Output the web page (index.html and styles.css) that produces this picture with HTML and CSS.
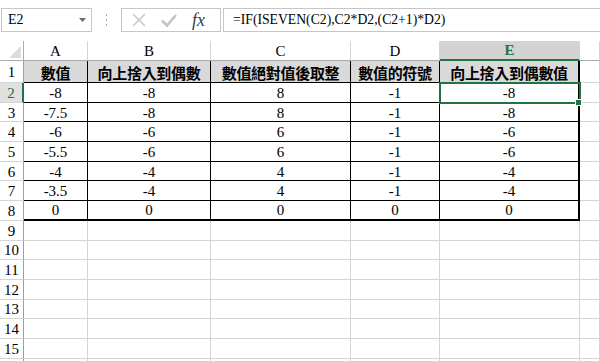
FILE: index.html
```html
<!DOCTYPE html>
<html lang="zh-Hant">
<head>
  <meta charset="UTF-8">
  <title>Sheet</title>
  <link rel="stylesheet" href="styles.css">
</head>
<body>
  <div class="formula-bar">
    <div class="name-box">
      <span>E2</span>
      <svg class="drop" width="7" height="4" viewBox="0 0 7 4"><polygon points="0,0 7,0 3.5,4" fill="#6a6a6a"/></svg>
    </div>
    <svg class="grip" width="3" height="12" viewBox="0 0 3 12">
      <rect x="1" y="0" width="1" height="2" fill="#a6a6a6"/>
      <rect x="1" y="5" width="1" height="2" fill="#a6a6a6"/>
      <rect x="1" y="10" width="1" height="2" fill="#a6a6a6"/>
    </svg>
    <div class="fx-buttons">
      <svg width="16" height="16" viewBox="0 0 16 16"><path d="M2 2 L14 14 M14 2 L2 14" stroke="#c4c4c4" stroke-width="1.4" fill="none"/></svg>
      <svg width="18" height="16" viewBox="0 0 18 16"><path d="M2 8.5 L7 13.5 L16 3" stroke="#c4c4c4" stroke-width="2.6" fill="none"/></svg>
      <span class="fx">fx</span>
    </div>
    <div class="formula-input">=IF(ISEVEN(C2),C2*D2,(C2+1)*D2)</div>
  </div>

  <div class="sheet">
    <div class="corner"><svg width="12" height="12" viewBox="0 0 12 12"><polygon points="12,0 12,12 0,12" fill="#dcdcdc"/></svg></div>
    <div class="ch">A</div><div class="ch">B</div><div class="ch">C</div><div class="ch">D</div><div class="ch sel-col">E</div><div class="ch"></div>

    <div class="rh">1</div>
    <div class="cell t h">數值</div><div class="cell t h">向上捨入到偶數</div><div class="cell t h">數值絕對值後取整</div><div class="cell t h">數值的符號</div><div class="cell t h last">向上捨入到偶數值</div><div class="cell"></div>

    <div class="rh sel-row">2</div>
    <div class="cell t">-8</div><div class="cell t">-8</div><div class="cell t">8</div><div class="cell t">-1</div><div class="cell t last active">-8</div><div class="cell"></div>

    <div class="rh">3</div>
    <div class="cell t">-7.5</div><div class="cell t">-8</div><div class="cell t">8</div><div class="cell t">-1</div><div class="cell t last">-8</div><div class="cell"></div>

    <div class="rh">4</div>
    <div class="cell t">-6</div><div class="cell t">-6</div><div class="cell t">6</div><div class="cell t">-1</div><div class="cell t last">-6</div><div class="cell"></div>

    <div class="rh">5</div>
    <div class="cell t">-5.5</div><div class="cell t">-6</div><div class="cell t">6</div><div class="cell t">-1</div><div class="cell t last">-6</div><div class="cell"></div>

    <div class="rh">6</div>
    <div class="cell t">-4</div><div class="cell t">-4</div><div class="cell t">4</div><div class="cell t">-1</div><div class="cell t last">-4</div><div class="cell"></div>

    <div class="rh">7</div>
    <div class="cell t">-3.5</div><div class="cell t">-4</div><div class="cell t">4</div><div class="cell t">-1</div><div class="cell t last">-4</div><div class="cell"></div>

    <div class="rh">8</div>
    <div class="cell t end">0</div><div class="cell t end">0</div><div class="cell t end">0</div><div class="cell t end">0</div><div class="cell t end last">0</div><div class="cell"></div>

    <div class="rh">9</div>
    <div class="cell"></div><div class="cell"></div><div class="cell"></div><div class="cell"></div><div class="cell"></div><div class="cell"></div>
    <div class="rh">10</div>
    <div class="cell"></div><div class="cell"></div><div class="cell"></div><div class="cell"></div><div class="cell"></div><div class="cell"></div>
    <div class="rh">11</div>
    <div class="cell"></div><div class="cell"></div><div class="cell"></div><div class="cell"></div><div class="cell"></div><div class="cell"></div>
    <div class="rh">12</div>
    <div class="cell"></div><div class="cell"></div><div class="cell"></div><div class="cell"></div><div class="cell"></div><div class="cell"></div>
    <div class="rh">13</div>
    <div class="cell"></div><div class="cell"></div><div class="cell"></div><div class="cell"></div><div class="cell"></div><div class="cell"></div>
    <div class="rh">14</div>
    <div class="cell"></div><div class="cell"></div><div class="cell"></div><div class="cell"></div><div class="cell"></div><div class="cell"></div>
    <div class="rh">15</div>
    <div class="cell"></div><div class="cell"></div><div class="cell"></div><div class="cell"></div><div class="cell"></div><div class="cell"></div>
    <div class="rh"></div>
    <div class="cell"></div><div class="cell"></div><div class="cell"></div><div class="cell"></div><div class="cell"></div><div class="cell"></div>
  </div>
</body>
</html>
```

FILE: styles.css
```css
body {
  margin: 0;
  padding: 0;
  width: 600px;
  height: 361px;
  overflow: hidden;
  background: #fff;
  font-family: "Liberation Serif", "Noto Sans CJK TC", serif;
  color: #000;
}

/* formula bar */
.formula-bar {
  display: flex;
  align-items: center;
  height: 24px;
  padding: 8px 0 0 1px;
}

.name-box {
  box-sizing: border-box;
  width: 91px;
  height: 24px;
  border: 1px solid #c6c6c6;
  display: flex;
  align-items: center;
  justify-content: space-between;
  padding: 0 5px 0 6px;
  font-family: "Liberation Serif", serif;
  font-size: 14px;
}

.grip {
  margin: 0 13px 0 13px;
}

.fx-buttons {
  box-sizing: border-box;
  width: 100px;
  height: 24px;
  border: 1px solid #c6c6c6;
  display: flex;
  align-items: center;
  padding: 0 0 0 9px;
  gap: 13px;
}

.fx {
  font-style: italic;
  font-size: 18px;
  color: #3c3c3c;
  margin-left: 1px;
}

.formula-input {
  box-sizing: border-box;
  flex: 1;
  height: 24px;
  margin-left: 2px;
  border: 1px solid #c6c6c6;
  border-right: none;
  padding-left: 9px;
  font-size: 13.7px;
  line-height: 22px;
}

/* sheet grid */
.sheet {
  margin-top: 9px;
  display: grid;
  grid-template-columns: 24px 64px 123px 140px 89px 140px 1fr;
  grid-template-rows: 20px 22px repeat(15, 19.7px);
}

.sheet > div {
  box-sizing: border-box;
  display: flex;
  align-items: center;
  justify-content: center;
  font-size: 15px;
  overflow: hidden;
  white-space: nowrap;
}

.corner {
  border-right: 1px solid #ababab;
  border-bottom: 1px solid #ababab;
  align-items: flex-end !important;
  justify-content: flex-end !important;
  padding: 0 2px 2px 0;
}

.ch {
  border-right: 1px solid #d4d4d4;
  border-bottom: 1px solid #ababab;
  font-size: 14px;
  padding-top: 1px;
}

.ch.sel-col {
  background: #d3d3d3;
  color: #217346;
  font-weight: bold;
  border-bottom: 2px solid #217346;
}

.rh {
  border-right: 1px solid #9e9e9e;
  border-bottom: 1px solid #d4d4d4;
  font-size: 15px;
  padding-top: 2px;
}

.rh.sel-row {
  background: #e1e1e1;
  color: #217346;
  border-right: 2px solid #217346;
}

.cell {
  border-right: 1px solid #d4d4d4;
  border-bottom: 1px solid #d4d4d4;
  padding-top: 2px;
}

.cell.t {
  border-color: #000;
}

.cell.h {
  background: #d9d9d9;
  font-family: "Noto Sans CJK TC", sans-serif;
  font-weight: bold;
  font-size: 15px;
  letter-spacing: -0.3px;
  padding-top: 1px;
}

.cell.last {
  border-right-width: 2px;
}

.cell.end {
  border-bottom-width: 2px;
}

.cell.active {
  position: relative;
  overflow: visible !important;
  outline: 2px solid #217346;
  outline-offset: -1px;
}

.cell.active::after {
  content: "";
  position: absolute;
  right: -4px;
  bottom: -4px;
  width: 5px;
  height: 5px;
  background: #217346;
  border: 1px solid #fff;
}
```
